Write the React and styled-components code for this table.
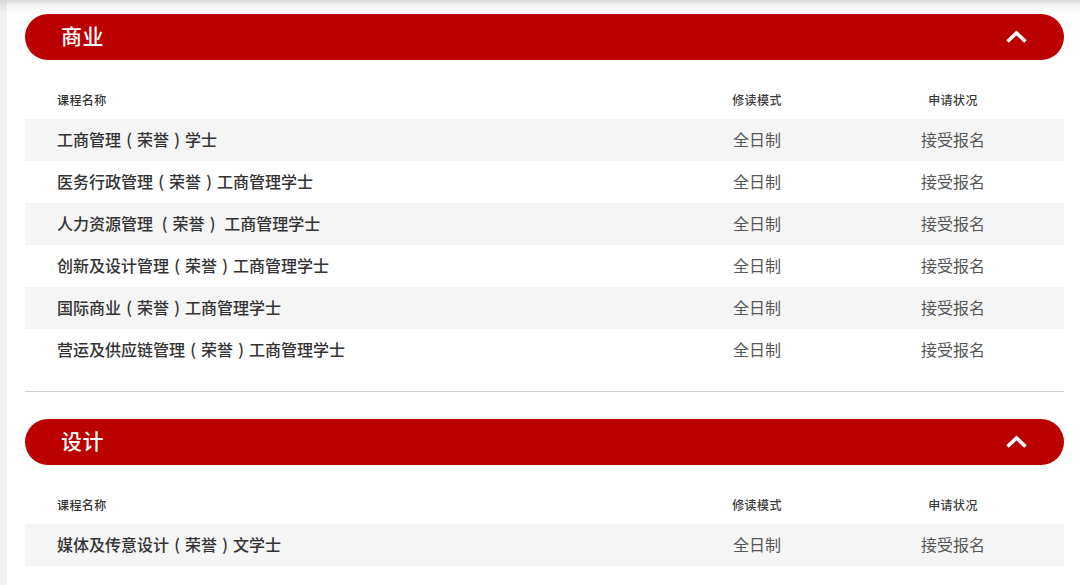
import React from 'react';
import styled, { createGlobalStyle } from 'styled-components';

const sections = [
  {
    title: '商业',
    courses: [
      ['工商管理', '荣誉', '学士'],
      ['医务行政管理', '荣誉', '工商管理学士'],
      ['人力资源管理 ', '荣誉', ' 工商管理学士'],
      ['创新及设计管理', '荣誉', '工商管理学士'],
      ['国际商业', '荣誉', '工商管理学士'],
      ['营运及供应链管理', '荣誉', '工商管理学士'],
    ],
  },
  {
    title: '设计',
    courses: [['媒体及传意设计', '荣誉', '文学士']],
  },
];

const GlobalStyle = createGlobalStyle`
  body {
    margin: 0;
    background: #fff;
    font-family: "Noto Sans CJK SC", "Noto Sans", sans-serif;
    color: #333;
  }
`;

const Page = styled.div`
  display: flex;
  min-height: 585px;
  background: linear-gradient(to bottom, #d8d8d8 0, #f4f4f4 5px, #fff 13px);
`;

const SideStrip = styled.div`
  width: 7px;
  flex-shrink: 0;
  background: linear-gradient(to bottom, #d8d8d8 0, #f1f1f1 12px);
`;

const Main = styled.main`
  flex: 1;
  padding: 14px 16px 0 18px;
`;

const Section = styled.section`
  padding-bottom: ${(p) => (p.$last ? '0' : '20px')};
  margin-bottom: ${(p) => (p.$last ? '0' : '27px')};
  border-bottom: ${(p) => (p.$last ? 'none' : '1px solid #cfcfcf')};
`;

const Bar = styled.div`
  height: 46px;
  border-radius: 23px;
  background: #bb0000;
  display: flex;
  align-items: center;
  justify-content: space-between;
  padding: 0 36px;
`;

const BarTitle = styled.h2`
  margin: 0 0 3px;
  color: #fff;
  font-size: 21px;
  line-height: 1;
  font-weight: 500;
  letter-spacing: 0.5px;
`;

const Chevron = styled.svg`
  width: 23px;
  height: 14px;
`;

const Grid = styled.div`
  display: grid;
  grid-template-columns: 1fr 170px 222px;
  align-items: center;
  box-sizing: border-box;
`;

const HeadRow = styled(Grid)`
  height: 59px;
  align-items: end;
  padding-bottom: 11px;
  font-size: 12px;
  line-height: 17px;
  font-weight: 500;
  color: #3a3a3a;
  letter-spacing: 0.4px;
`;

const Row = styled(Grid)`
  height: 42px;
  padding-bottom: 3px;
  background: ${(p) => (p.$shaded ? '#f5f5f5' : '#fff')};
  font-size: 16px;
`;

const NameCell = styled.div`
  padding-left: 32px;
  font-weight: 500;
  color: #333;
  white-space: pre;
`;

const Paren = styled.span`
  display: inline-block;
  width: 1em;
  text-align: center;
`;

const Cell = styled.div`
  text-align: center;
  color: ${(p) => (p.$head ? '#3a3a3a' : '#555')};
  font-weight: ${(p) => (p.$head ? 500 : 400)};
`;

const App = () => {
  return (
    <>
      <GlobalStyle />
      <Page>
        <SideStrip />
        <Main>
          {sections.map((section, i) => (
            <Section key={section.title} $last={i === sections.length - 1}>
              <Bar>
                <BarTitle>{section.title}</BarTitle>
                <Chevron viewBox="0 0 23 14">
                  <polyline
                    points="2.5,11.5 11.5,3 20.5,11.5"
                    fill="none"
                    stroke="#fff"
                    strokeWidth="3.6"
                  />
                </Chevron>
              </Bar>

              <HeadRow>
                <NameCell>课程名称</NameCell>
                <Cell $head>修读模式</Cell>
                <Cell $head>申请状况</Cell>
              </HeadRow>

              {section.courses.map(([before, honour, after], j) => (
                <Row key={before + after} $shaded={j % 2 === 0}>
                  <NameCell>
                    {before}
                    <Paren>(</Paren>
                    {honour}
                    <Paren>)</Paren>
                    {after}
                  </NameCell>
                  <Cell>全日制</Cell>
                  <Cell>接受报名</Cell>
                </Row>
              ))}
            </Section>
          ))}
        </Main>
      </Page>
    </>
  );
};

export default App;
